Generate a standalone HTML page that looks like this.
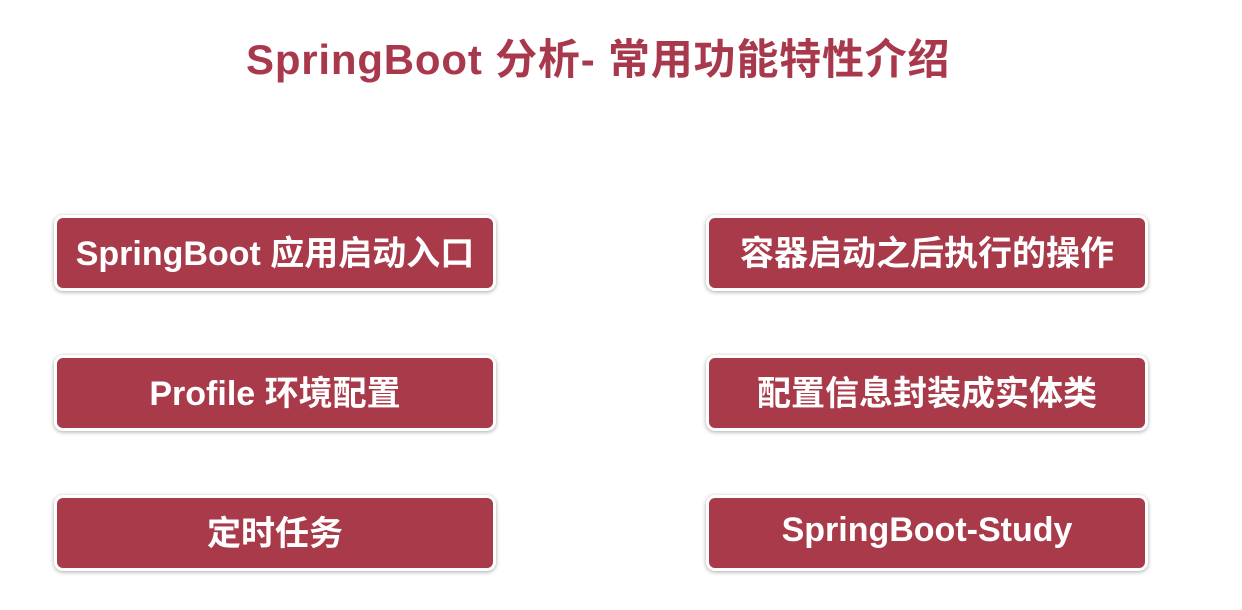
<!DOCTYPE html><html><head><meta charset="utf-8"><style>
body{margin:0;width:1242px;height:610px;background:#fff;overflow:hidden;font-family:"Liberation Sans","Noto Sans CJK SC",sans-serif;position:relative}
h1{position:absolute;left:246px;top:26px;margin:0;font-size:42px;font-weight:bold;color:#a8384b;white-space:nowrap;letter-spacing:0.8px}
.b{position:absolute;width:436px;height:70px;background:#a83a4a;border:3px solid #fff;border-radius:9px;box-shadow:0 1px 4px rgba(0,0,0,.35);color:#fff;font-weight:bold;font-size:34px;display:flex;align-items:center;justify-content:center;white-space:nowrap;padding-bottom:6px;box-sizing:content-box;height:64px}
</style></head><body>
<h1>SpringBoot 分析- 常用功能特性介绍</h1>
<div class="b" style="left:54px;top:215px">SpringBoot 应用启动入口</div>
<div class="b" style="left:706px;top:215px">容器启动之后执行的操作</div>
<div class="b" style="left:54px;top:355px">Profile 环境配置</div>
<div class="b" style="left:706px;top:355px">配置信息封装成实体类</div>
<div class="b" style="left:54px;top:495px">定时任务</div>
<div class="b" style="left:706px;top:495px">SpringBoot-Study</div>
</body></html>
